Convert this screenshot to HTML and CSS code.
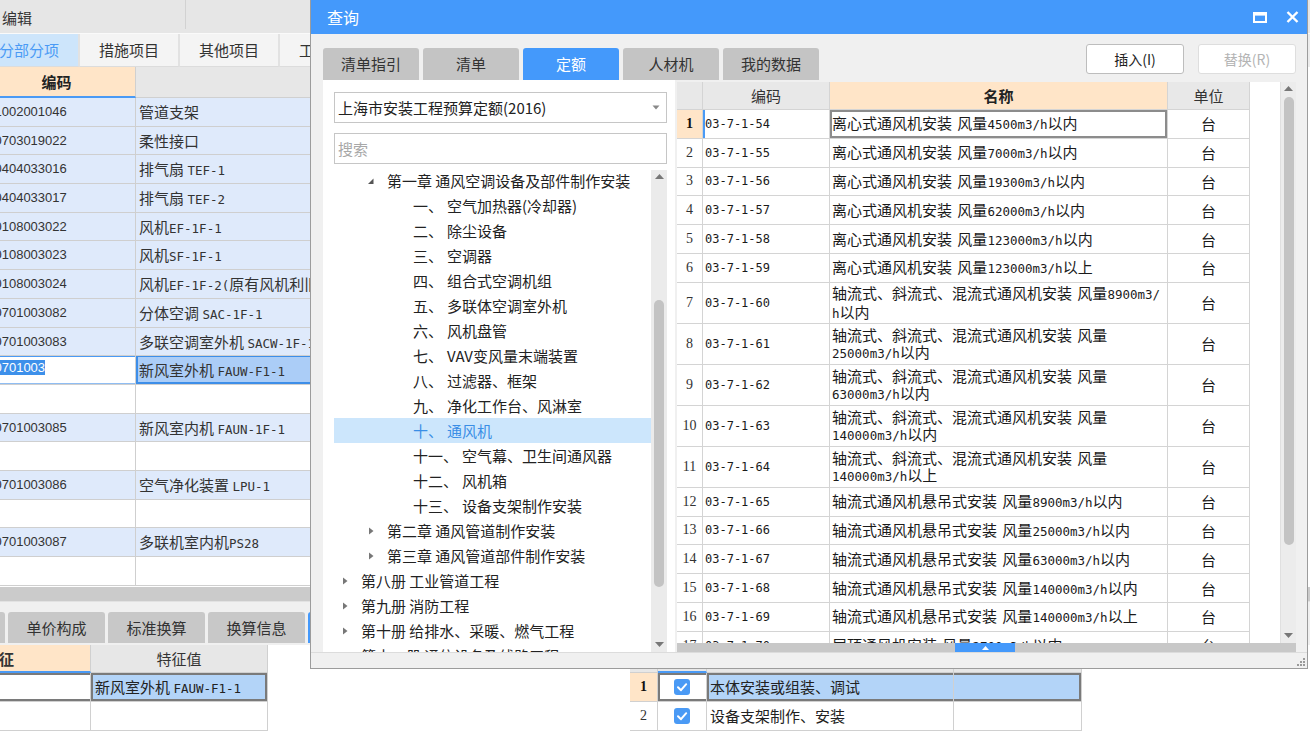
FILE: index.html
```html
<!DOCTYPE html>
<html lang="zh-CN">
<head>
<meta charset="utf-8">
<title>查询</title>
<link rel="stylesheet" href="styles.css">
</head>
<body>
<div class="screen">
  <div class="app">
    <div class="menubar"><div class="menu-title">编辑</div></div>
    <div class="ptabs">
      <div class="ptab active">分部分项</div>
      <div class="ptab">措施项目</div>
      <div class="ptab">其他项目</div>
      <div class="ptab">工料机表</div>
    </div>
    <div class="mgrid">
      <div class="mh code-h">编码</div><div class="mh">名称</div>
      <div class="mc c b">031002001046</div><div class="mc n b">管道支架</div>
      <div class="mc c b">030703019022</div><div class="mc n b">柔性接口</div>
      <div class="mc c b">030404033016</div><div class="mc n b">排气扇 <span class="m">TEF-1</span></div>
      <div class="mc c b">030404033017</div><div class="mc n b">排气扇 <span class="m">TEF-2</span></div>
      <div class="mc c b">030108003022</div><div class="mc n b">风机<span class="m">EF-1F-1</span></div>
      <div class="mc c b">030108003023</div><div class="mc n b">风机<span class="m">SF-1F-1</span></div>
      <div class="mc c b">030108003024</div><div class="mc n b">风机<span class="m">EF-1F-2(</span>原有风机利旧<span class="m">)</span></div>
      <div class="mc c b">030701003082</div><div class="mc n b">分体空调 <span class="m">SAC-1F-1</span></div>
      <div class="mc c b">030701003083</div><div class="mc n b">多联空调室外机 <span class="m">SACW-1F-1</span></div>
      <div class="mc c edit"><span class="sel">030701003</span></div><div class="mc n selcell">新风室外机 <span class="m">FAUW-F1-1</span></div>
      <div class="mc c"></div><div class="mc n"></div>
      <div class="mc c b">030701003085</div><div class="mc n b">新风室内机 <span class="m">FAUN-1F-1</span></div>
      <div class="mc c"></div><div class="mc n"></div>
      <div class="mc c b">030701003086</div><div class="mc n b">空气净化装置 <span class="m">LPU-1</span></div>
      <div class="mc c"></div><div class="mc n"></div>
      <div class="mc c b">030701003087</div><div class="mc n b">多联机室内机<span class="m">PS28</span></div>
      <div class="mc c"></div><div class="mc n"></div>
    </div>
    <div class="splitter"></div>
    <div class="btabs">
      <div class="btab">工料机显示</div>
      <div class="btab">单价构成</div>
      <div class="btab">标准换算</div>
      <div class="btab">换算信息</div>
      <div class="btab active">特征及内容</div>
    </div>
    <div class="bottom">
      <div class="fgrid">
        <div class="fh peach">特征</div><div class="fh">特征值</div>
        <div class="fc r1l"></div><div class="fc r1r">新风室外机 <span class="m">FAUW-F1-1</span></div>
        <div class="fc"></div><div class="fc"></div>
      </div>
      <div class="wgrid">
        <div class="wh"></div><div class="wh bl">输出</div><div class="wh">工作内容</div><div class="wh"></div>
        <div class="wc num cur">1</div><div class="wc chk s1"><span class="cb"><svg width="16" height="16" viewBox="0 0 16 16"><path d="M4 8.3L7 11.2L12.2 5.2" fill="none" stroke="#fff" stroke-width="2" stroke-linecap="round" stroke-linejoin="round"/></svg></span></div><div class="wc txt s2">本体安装或组装、调试</div><div class="wc s3"></div>
        <div class="wc num">2</div><div class="wc chk"><span class="cb"><svg width="16" height="16" viewBox="0 0 16 16"><path d="M4 8.3L7 11.2L12.2 5.2" fill="none" stroke="#fff" stroke-width="2" stroke-linecap="round" stroke-linejoin="round"/></svg></span></div><div class="wc txt">设备支架制作、安装</div><div class="wc"></div>
      </div>
    </div>
  </div>

  <div class="dialog">
    <div class="dlg-title">
      <span class="dlg-name">查询</span>
      <div class="dlg-icons">
        <svg width="14" height="11" viewBox="0 0 14 11"><rect x="1" y="1" width="12" height="9" fill="none" stroke="#fff" stroke-width="2"/><rect x="1" y="1" width="12" height="2.6" fill="#fff"/></svg>
        <svg width="13" height="12" viewBox="0 0 13 12"><path d="M1.5 1L11.5 11M11.5 1L1.5 11" stroke="#fff" stroke-width="2.4"/></svg>
      </div>
    </div>
    <div class="dlg-head">
      <div class="qtabs">
        <div class="qtab">清单指引</div>
        <div class="qtab">清单</div>
        <div class="qtab active">定额</div>
        <div class="qtab">人材机</div>
        <div class="qtab">我的数据</div>
      </div>
      <div class="btns">
        <div class="btn">插入(I)</div>
        <div class="btn disabled">替换(R)</div>
      </div>
    </div>
    <div class="dlg-main">
      <div class="lp">
        <div class="combo"><span>上海市安装工程预算定额(2016)</span><svg width="8" height="5" viewBox="0 0 8 5"><path d="M0.5 0.5H7.5L4 4.5Z" fill="#888"/></svg></div>
        <div class="search">搜索</div>
        <div class="tree">
          <div class="tlist">
            <div class="ti l2"><span class="tw"><svg width="12" height="12" viewBox="0 0 12 12"><path d="M8.5 3.5V9H3Z" fill="#555"/></svg></span>第一章 通风空调设备及部件制作安装</div>
            <div class="ti l3"><span class="no">一、</span>空气加热器(冷却器)</div>
            <div class="ti l3"><span class="no">二、</span>除尘设备</div>
            <div class="ti l3"><span class="no">三、</span>空调器</div>
            <div class="ti l3"><span class="no">四、</span>组合式空调机组</div>
            <div class="ti l3"><span class="no">五、</span>多联体空调室外机</div>
            <div class="ti l3"><span class="no">六、</span>风机盘管</div>
            <div class="ti l3"><span class="no">七、</span>VAV变风量末端装置</div>
            <div class="ti l3"><span class="no">八、</span>过滤器、框架</div>
            <div class="ti l3"><span class="no">九、</span>净化工作台、风淋室</div>
            <div class="ti l3 hl"><span class="no">十、</span>通风机</div>
            <div class="ti l3"><span class="no">十一、</span>空气幕、卫生间通风器</div>
            <div class="ti l3"><span class="no">十二、</span>风机箱</div>
            <div class="ti l3"><span class="no">十三、</span>设备支架制作安装</div>
            <div class="ti l2"><span class="tw"><svg width="12" height="12" viewBox="0 0 12 12"><path d="M4 2.5L8.5 6L4 9.5Z" fill="#777"/></svg></span>第二章 通风管道制作安装</div>
            <div class="ti l2"><span class="tw"><svg width="12" height="12" viewBox="0 0 12 12"><path d="M4 2.5L8.5 6L4 9.5Z" fill="#777"/></svg></span>第三章 通风管道部件制作安装</div>
            <div class="ti l1"><span class="tw"><svg width="12" height="12" viewBox="0 0 12 12"><path d="M4 2.5L8.5 6L4 9.5Z" fill="#777"/></svg></span>第八册 工业管道工程</div>
            <div class="ti l1"><span class="tw"><svg width="12" height="12" viewBox="0 0 12 12"><path d="M4 2.5L8.5 6L4 9.5Z" fill="#777"/></svg></span>第九册 消防工程</div>
            <div class="ti l1"><span class="tw"><svg width="12" height="12" viewBox="0 0 12 12"><path d="M4 2.5L8.5 6L4 9.5Z" fill="#777"/></svg></span>第十册 给排水、采暖、燃气工程</div>
            <div class="ti l1"><span class="tw"><svg width="12" height="12" viewBox="0 0 12 12"><path d="M4 2.5L8.5 6L4 9.5Z" fill="#777"/></svg></span>第十一册 通信设备及线路工程</div>
          </div>
          <div class="vs tvs">
            <svg class="arr" width="9" height="5" viewBox="0 0 9 5"><path d="M0 5L4.5 0L9 5Z" fill="#777"/></svg>
            <div class="thumb tthumb"></div>
            <svg class="arr down" width="9" height="5" viewBox="0 0 9 5"><path d="M0 0L4.5 5L9 0Z" fill="#777"/></svg>
          </div>
        </div>
      </div>
      <div class="rt">
        <div class="rt-body">
          <div class="tbl">
            <div class="tr th"><div class="td"></div><div class="td">编码</div><div class="td pk">名称</div><div class="td">单位</div></div>
            <div class="tr s"><div class="td rn cur">1</div><div class="td cd foc">03-7-1-54</div><div class="td nm selc"><span class="t">离心式通风机安装 风量<span class="m">4500m3/h</span>以内</span></div><div class="td un">台</div></div>
            <div class="tr s"><div class="td rn">2</div><div class="td cd">03-7-1-55</div><div class="td nm"><span class="t">离心式通风机安装 风量<span class="m">7000m3/h</span>以内</span></div><div class="td un">台</div></div>
            <div class="tr s"><div class="td rn">3</div><div class="td cd">03-7-1-56</div><div class="td nm"><span class="t">离心式通风机安装 风量<span class="m">19300m3/h</span>以内</span></div><div class="td un">台</div></div>
            <div class="tr s"><div class="td rn">4</div><div class="td cd">03-7-1-57</div><div class="td nm"><span class="t">离心式通风机安装 风量<span class="m">62000m3/h</span>以内</span></div><div class="td un">台</div></div>
            <div class="tr s"><div class="td rn">5</div><div class="td cd">03-7-1-58</div><div class="td nm"><span class="t">离心式通风机安装 风量<span class="m">123000m3/h</span>以内</span></div><div class="td un">台</div></div>
            <div class="tr s"><div class="td rn">6</div><div class="td cd">03-7-1-59</div><div class="td nm"><span class="t">离心式通风机安装 风量<span class="m">123000m3/h</span>以上</span></div><div class="td un">台</div></div>
            <div class="tr d"><div class="td rn">7</div><div class="td cd">03-7-1-60</div><div class="td nm"><span class="t">轴流式、斜流式、混流式通风机安装 风量<span class="m">8900m3/</span><br><span class="m">h</span>以内</span></div><div class="td un">台</div></div>
            <div class="tr d"><div class="td rn">8</div><div class="td cd">03-7-1-61</div><div class="td nm"><span class="t">轴流式、斜流式、混流式通风机安装 风量<br><span class="m">25000m3/h</span>以内</span></div><div class="td un">台</div></div>
            <div class="tr d"><div class="td rn">9</div><div class="td cd">03-7-1-62</div><div class="td nm"><span class="t">轴流式、斜流式、混流式通风机安装 风量<br><span class="m">63000m3/h</span>以内</span></div><div class="td un">台</div></div>
            <div class="tr d"><div class="td rn">10</div><div class="td cd">03-7-1-63</div><div class="td nm"><span class="t">轴流式、斜流式、混流式通风机安装 风量<br><span class="m">140000m3/h</span>以内</span></div><div class="td un">台</div></div>
            <div class="tr d"><div class="td rn">11</div><div class="td cd">03-7-1-64</div><div class="td nm"><span class="t">轴流式、斜流式、混流式通风机安装 风量<br><span class="m">140000m3/h</span>以上</span></div><div class="td un">台</div></div>
            <div class="tr s"><div class="td rn">12</div><div class="td cd">03-7-1-65</div><div class="td nm"><span class="t">轴流式通风机悬吊式安装 风量<span class="m">8900m3/h</span>以内</span></div><div class="td un">台</div></div>
            <div class="tr s"><div class="td rn">13</div><div class="td cd">03-7-1-66</div><div class="td nm"><span class="t">轴流式通风机悬吊式安装 风量<span class="m">25000m3/h</span>以内</span></div><div class="td un">台</div></div>
            <div class="tr s"><div class="td rn">14</div><div class="td cd">03-7-1-67</div><div class="td nm"><span class="t">轴流式通风机悬吊式安装 风量<span class="m">63000m3/h</span>以内</span></div><div class="td un">台</div></div>
            <div class="tr s"><div class="td rn">15</div><div class="td cd">03-7-1-68</div><div class="td nm"><span class="t">轴流式通风机悬吊式安装 风量<span class="m">140000m3/h</span>以内</span></div><div class="td un">台</div></div>
            <div class="tr s"><div class="td rn">16</div><div class="td cd">03-7-1-69</div><div class="td nm"><span class="t">轴流式通风机悬吊式安装 风量<span class="m">140000m3/h</span>以上</span></div><div class="td un">台</div></div>
            <div class="tr s"><div class="td rn">17</div><div class="td cd">03-7-1-70</div><div class="td nm"><span class="t">屋顶通风机安装 风量<span class="m">2700m3/h</span>以内</span></div><div class="td un">台</div></div>
          </div>
          <div class="blank"></div>
          <div class="vs rvs">
            <svg class="arr" width="9" height="5" viewBox="0 0 9 5"><path d="M0 5L4.5 0L9 5Z" fill="#777"/></svg>
            <div class="thumb rthumb"></div>
            <svg class="arr down" width="9" height="5" viewBox="0 0 9 5"><path d="M0 0L4.5 5L9 0Z" fill="#777"/></svg>
          </div>
        </div>
        <div class="hs"><div class="hs-handle"><svg width="7" height="4" viewBox="0 0 7 4"><path d="M0 4L3.5 0L7 4Z" fill="#fff"/></svg></div></div>
      </div>
    </div>
    <div class="dlg-status">
      <svg class="grip" width="9" height="9" viewBox="0 0 9 9"><g fill="#9a9a9a"><rect x="7" y="1" width="2" height="2"/><rect x="4" y="4" width="2" height="2"/><rect x="7" y="4" width="2" height="2"/><rect x="1" y="7" width="2" height="2"/><rect x="4" y="7" width="2" height="2"/><rect x="7" y="7" width="2" height="2"/></g></svg>
    </div>
  </div>
</div>
</body>
</html>
```

FILE: styles.css
```css
* { box-sizing: border-box; margin: 0; padding: 0; }
html, body { width: 1310px; height: 732px; overflow: hidden; background: #fff; }
body { font-family: "Noto Sans CJK SC", "Liberation Sans", sans-serif; font-size: 14px; color: #222; }
.screen { position: relative; width: 1310px; height: 732px; overflow: hidden; }
.m { font-family: "DejaVu Sans Mono", "Liberation Mono", "Noto Sans CJK SC", monospace; }

/* ---------- background application ---------- */
.app { display: flex; flex-direction: column; width: 1310px; height: 732px; overflow: hidden; }
.menubar { height: 33px; background: #e6e6e6; display: flex; flex-shrink: 0; }
.menu-title { width: 186px; height: 29px; border-right: 1px solid #d2d2d2; font-size: 15px; line-height: 36px; padding-left: 2px; color: #333; }

.ptabs { height: 34px; display: flex; margin-left: -20px; border-top: 1px solid #fafafa; background: #ececec; flex-shrink: 0; }
.ptab { width: 100px; height: 33px; background: #f4f4f4; border-right: 2px solid #e2e2e2; border-bottom: 1px solid #dcdcdc; text-align: center; font-size: 15px; line-height: 32px; color: #333; }
.ptab.active { background: #cde5fb; color: #4a9af5; }

.mgrid { display: grid; grid-template-columns: 158px 400px; grid-template-rows: 31px; grid-auto-rows: 28.7px; margin-left: -22px; flex-shrink: 0; }
.mh { background: #e7e7e7; border-right: 1px solid #d0d0d0; border-bottom: 1px solid #d0d0d0; text-align: center; font-weight: bold; font-size: 15px; line-height: 30px; color: #222; }
.mh.code-h { background: #ffe5c8; border-bottom: 2px solid #4a9af5; }
.mc { border-right: 1px solid #cfcfcf; border-bottom: 1px solid #cfcfcf; white-space: nowrap; overflow: hidden; line-height: 27.7px; color: #333; background: #fff; }
.mc.c { font-family: "Liberation Sans", sans-serif; font-size: 13px; padding-left: 2px; }
.mc.n { font-size: 15px; padding-left: 3px; }
.mc.n .m { font-size: 12.5px; }
.mc.b { background: #dfeafb; }
.mc.edit { box-shadow: inset 0 1px 0 #4a9af5, inset 0 -1px 0 #8fbdf3; line-height: 15px; padding-top: 4px; }
.sel { background: #3d90ea; color: #fff; }
.mc.selcell { background: #abcdf7; box-shadow: inset 2px 0 0 #3d8ee8, inset 0 1px 0 #3d8ee8, inset 0 -2px 0 #3d8ee8; }

.splitter { height: 15px; margin-top: 1px; background: #cbcbcb; border-bottom: 1px solid #e2e2e2; flex-shrink: 0; }
.btabs { height: 43px; background: #f0f0f0; display: flex; align-items: flex-end; gap: 3px; margin-left: -92px; padding-bottom: 2px; flex-shrink: 0; }
.btab { width: 97px; height: 31px; background: #c8c8c8; border-radius: 3px 3px 0 0; text-align: center; line-height: 31px; font-size: 15px; color: #333; }
.btab.active { background: #4499fb; color: #fff; }

.bottom { display: flex; height: 87px; flex-shrink: 0; }
.fgrid { display: grid; grid-template-columns: 183px 177px; grid-template-rows: 28px 29px 29px; margin-left: -92px; width: 360px; flex-shrink: 0; }
.fh { background: #e7e7e7; border-right: 1px solid #d0d0d0; border-bottom: 1px solid #d0d0d0; text-align: center; font-size: 15px; line-height: 27px; color: #333; }
.fh.peach { background: #ffe5c8; font-weight: bold; border-bottom: 2px solid #4a9af5; }
.fc { border-right: 1px solid #d0d0d0; border-bottom: 1px solid #d0d0d0; font-size: 15px; line-height: 28px; padding-left: 4px; white-space: nowrap; overflow: hidden; color: #222; }
.fc .m { font-size: 12.5px; }
.fc.r1l { box-shadow: inset 2px 0 0 #7a7a7a, inset 0 2px 0 #7a7a7a, inset 0 -2px 0 #7a7a7a; }
.fc.r1r { background: #b3d4f8; box-shadow: inset 2px 0 0 #7a7a7a, inset -2px 0 0 #7a7a7a, inset 0 2px 0 #7a7a7a, inset 0 -2px 0 #7a7a7a; }

.wgrid { display: grid; grid-template-columns: 28px 49px 247px 128px; grid-template-rows: 28px 29px 29px; margin-left: 362px; width: 452px; flex-shrink: 0; }
.wh { background: #e7e7e7; border-right: 1px solid #d0d0d0; border-bottom: 1px solid #d0d0d0; text-align: center; font-size: 15px; line-height: 27px; color: #333; }
.wh.bl { border-bottom: 2px solid #4a9af5; }
.wc { border-right: 1px solid #d0d0d0; border-bottom: 1px solid #d0d0d0; background: #fff; }
.wc.num { text-align: center; font-family: "Liberation Serif", serif; font-size: 14px; line-height: 28px; color: #333; }
.wc.num.cur { background: #ffe5c8; font-weight: bold; color: #111; }
.wc.chk { display: flex; align-items: center; justify-content: center; }
.cb { width: 16px; height: 16px; border-radius: 3px; background: #4a9af5; display: block; }
.cb svg { display: block; }
.wc.txt { font-size: 15px; line-height: 28px; padding-left: 3px; white-space: nowrap; color: #222; }
.wc.s1 { box-shadow: inset 2px 0 0 #7a7a7a, inset 0 2px 0 #7a7a7a, inset 0 -2px 0 #7a7a7a; }
.wc.s2 { background: #b3d4f8; box-shadow: inset 2px 0 0 #7a7a7a, inset 0 2px 0 #7a7a7a, inset 0 -2px 0 #7a7a7a; }
.wc.s3 { background: #b3d4f8; box-shadow: inset -2px 0 0 #7a7a7a, inset 0 2px 0 #7a7a7a, inset 0 -2px 0 #7a7a7a; }

/* ---------- query dialog ---------- */
.dialog { position: absolute; left: 310px; top: 0; width: 998px; height: 669px; background: #f0f0f0; border: 1px solid #9c9c9c; border-top: none; display: flex; flex-direction: column; }
.dlg-title { height: 34px; background: #4499fb; color: #fff; display: flex; align-items: center; padding: 0 8px 0 16px; flex-shrink: 0; }
.dlg-name { font-size: 16px; line-height: 34px; }
.dlg-icons { margin-left: auto; display: flex; align-items: center; gap: 19px; }
.dlg-icons svg { display: block; }

.dlg-head { height: 46px; display: flex; padding: 0 11px 0 12px; flex-shrink: 0; }
.qtabs { display: flex; align-self: flex-end; gap: 4px; }
.qtab { width: 96px; height: 32px; background: #c4c4c4; border-radius: 3px 3px 0 0; text-align: center; font-size: 15px; line-height: 32px; color: #333; }
.qtab.active { background: #4499fb; color: #fff; }
.btns { margin-left: auto; margin-top: 10px; display: flex; gap: 14px; align-self: flex-start; }
.btn { width: 98px; height: 30px; background: #fff; border: 1px solid #bdbdbd; border-radius: 3px; text-align: center; font-size: 14px; line-height: 28px; color: #222; }
.btn.disabled { border-color: #dedede; color: #b4b4b4; }

.dlg-main { flex: 1; display: flex; padding: 0 11px 0 12px; min-height: 0; }
.lp { width: 352px; background: #fff; padding: 12px 8px 0 11px; display: flex; flex-direction: column; flex-shrink: 0; }
.combo { height: 31px; border: 1px solid #c6c6c6; display: flex; align-items: center; padding: 0 6px 0 3px; font-size: 15px; color: #222; flex-shrink: 0; }
.combo svg { margin-left: auto; display: block; }
.search { height: 31px; margin-top: 10px; border: 1px solid #c6c6c6; font-size: 15px; line-height: 29px; padding-left: 3px; color: #a8a8a8; flex-shrink: 0; }
.tree { flex: 1; margin-top: 6px; display: flex; min-height: 0; }
.tlist { flex: 1; overflow: hidden; margin-top: -2px; }
.ti { height: 25px; display: flex; align-items: center; font-size: 15px; white-space: nowrap; color: #222; }
.ti.l1 { padding-left: 5px; }
.ti.l2 { padding-left: 31px; }
.ti.l3 { padding-left: 79px; }
.tw { width: 12px; height: 12px; margin-right: 10px; display: block; flex-shrink: 0; }
.tw svg { display: block; }
.no { margin-right: 4px; }
.ti.hl { background: #cce6fc; color: #3a8ee6; }

.vs { width: 16px; background: #ebebeb; display: flex; flex-direction: column; align-items: center; flex-shrink: 0; }
.vs .arr { display: block; margin-top: 4px; }
.vs .arr.down { margin-top: auto; margin-bottom: 5px; }
.thumb { width: 10px; background: #c3c3c3; border-radius: 5px; }
.tthumb { margin-top: 121px; height: 287px; }
.rthumb { margin-top: 6px; height: 448px; }

.rt { width: 619px; margin-left: 2px; margin-top: 2px; display: flex; flex-direction: column; background: #fff; flex-shrink: 0; }
.rt-body { flex: 1; display: flex; min-height: 0; }
.tbl { width: 573px; overflow: hidden; flex-shrink: 0; }
.blank { width: 30px; background: #fff; flex-shrink: 0; }
.rvs { background: #ececec; border-left: 1px solid #e0e0e0; }
.hs { height: 9px; background: #c8c8c8; flex-shrink: 0; display: flex; }
.hs-handle { margin-left: 278px; width: 60px; height: 9px; background: #4499fb; display: flex; align-items: center; justify-content: center; }
.hs-handle svg { display: block; }

.tr { display: grid; grid-template-columns: 26px 127px 338px 82px; }
.tr.th { height: 28px; }
.tr.s { height: 28.8px; }
.tr.d { height: 41px; }
.td { border-right: 1px solid #d4d4d4; border-bottom: 1px solid #d4d4d4; display: flex; align-items: center; white-space: nowrap; overflow: hidden; color: #1a1a1a; }
.th .td { background: #e8e8e8; justify-content: center; font-size: 15px; color: #333; }
.th .td.pk { background: #ffe5c8; font-weight: bold; color: #222; }
.td.rn { justify-content: center; font-family: "Liberation Serif", serif; font-size: 14px; color: #333; }
.td.rn.cur { background: #ffe5c8; font-weight: bold; color: #111; }
.td.cd { font-family: "DejaVu Sans Mono", "Liberation Mono", monospace; font-size: 12px; padding-left: 2px; }
.td.cd.foc { box-shadow: inset 2px 0 0 #4a9af5; }
.td.nm { font-size: 15px; padding-left: 2px; }
.td.nm .t { display: block; line-height: 17px; word-spacing: 2px; }
.td.nm .m { font-size: 12.5px; word-spacing: 0; }
.td.nm.selc { box-shadow: inset 0 0 0 2px #8c8c8c; }
.td.un { justify-content: center; font-size: 15px; }

.dlg-status { height: 16px; border-top: 1px solid #dcdcdc; display: flex; justify-content: flex-end; align-items: flex-end; padding: 0 2px 2px 0; flex-shrink: 0; }
.grip { display: block; }
```
